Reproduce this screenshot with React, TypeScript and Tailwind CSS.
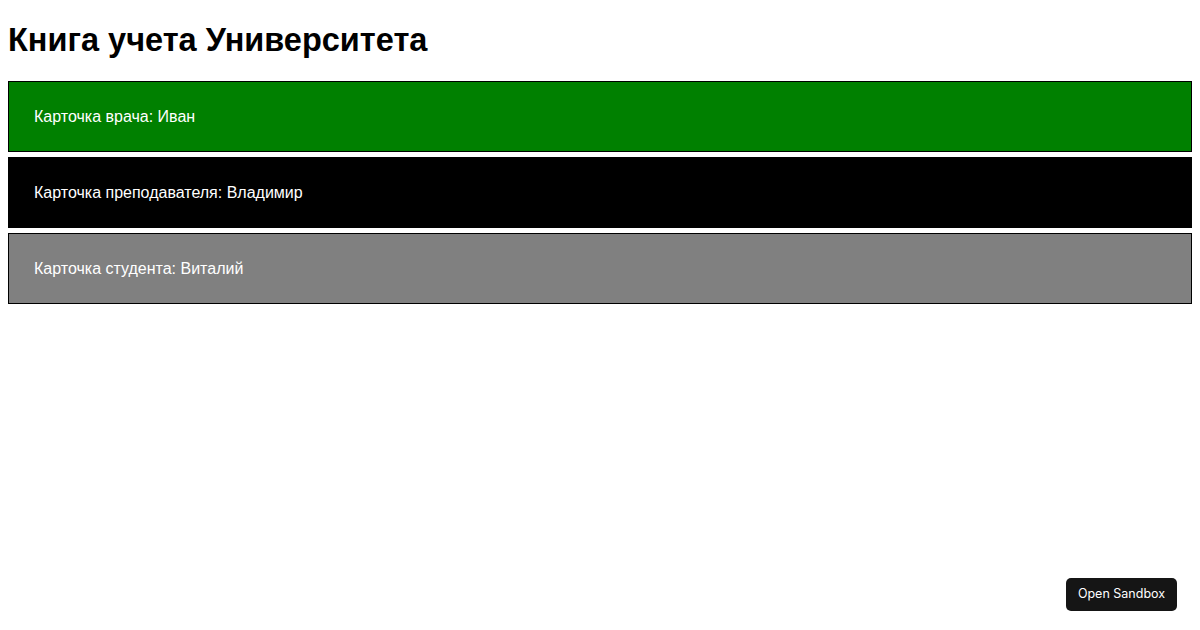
export default function App() {
  const cards = [
    { label: "Карточка врача: Иван", bg: "bg-[#008000]" },
    { label: "Карточка преподавателя: Владимир", bg: "bg-black" },
    { label: "Карточка студента: Виталий", bg: "bg-[#808080]" },
  ];

  return (
    <div className="relative min-h-[630px] bg-white px-2 pt-[22px] font-['Liberation_Sans',Arial,sans-serif] text-black">
      <h1 className="text-[32.5px] font-bold leading-[37px]">Книга учета Университета</h1>

      <div className="mt-[22px] flex flex-col gap-[5px]">
        {cards.map((c) => (
          <div
            key={c.label}
            className={`${c.bg} h-[71px] border border-black px-[25px] flex items-center text-base text-white`}
          >
            {c.label}
          </div>
        ))}
      </div>

      {/* sandbox button overlay */}
      <button className="absolute right-[23px] bottom-[19px] h-[33px] w-[111px] rounded-[5px] bg-[#151515] text-[12.5px] text-white font-['Inter',sans-serif]">
        Open Sandbox
      </button>
    </div>
  );
}
